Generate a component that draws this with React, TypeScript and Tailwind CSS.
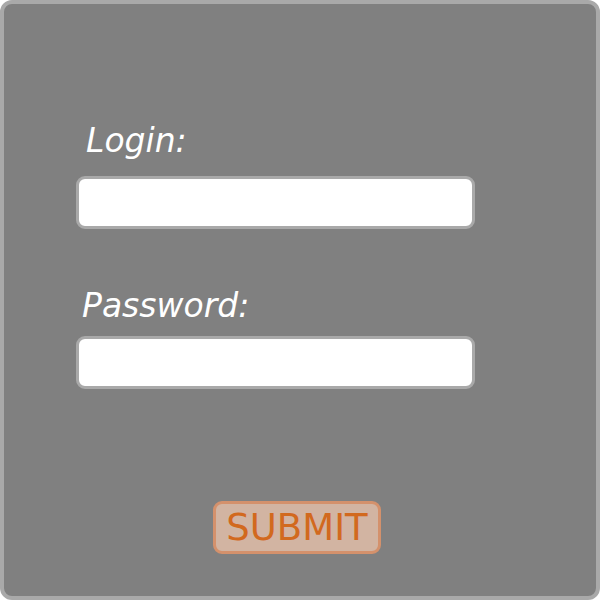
export default function App() {
  const font = { fontFamily: '"Comic Sans MS", "DejaVu Sans", sans-serif' };
  return (
    <div
      className="w-[600px] h-[600px] border-4 border-[#a9a9a9] rounded-[12px] bg-[#808080] pl-[72px] pt-[117px]"
      style={font}
    >
      <form className="flex flex-col w-[399px]" onSubmit={(e) => e.preventDefault()}>
        <label className="text-white italic text-[33px] leading-[40px] ml-[10px]">Login:</label>
        <input
          type="text"
          className="mt-[15px] h-[53px] w-[399px] rounded-[9px] border-[3px] border-[#a9a9a9] bg-white outline-none"
        />
        <label className="mt-[57px] text-white italic text-[33px] leading-[40px] ml-[6px]">Password:</label>
        <input
          type="password"
          className="mt-[10px] h-[53px] w-[399px] rounded-[9px] border-[3px] border-[#a9a9a9] bg-white outline-none"
        />
      </form>
      <button
        className="mt-[112px] ml-[137px] w-[168px] h-[53px] rounded-[9px] border-[3px] border-[#d4916c] bg-[#d2b4a2] text-[#d2691e] text-[37px] leading-[40px] flex items-center justify-center"
        style={font}
      >
        SUBMIT
      </button>
    </div>
  );
}
